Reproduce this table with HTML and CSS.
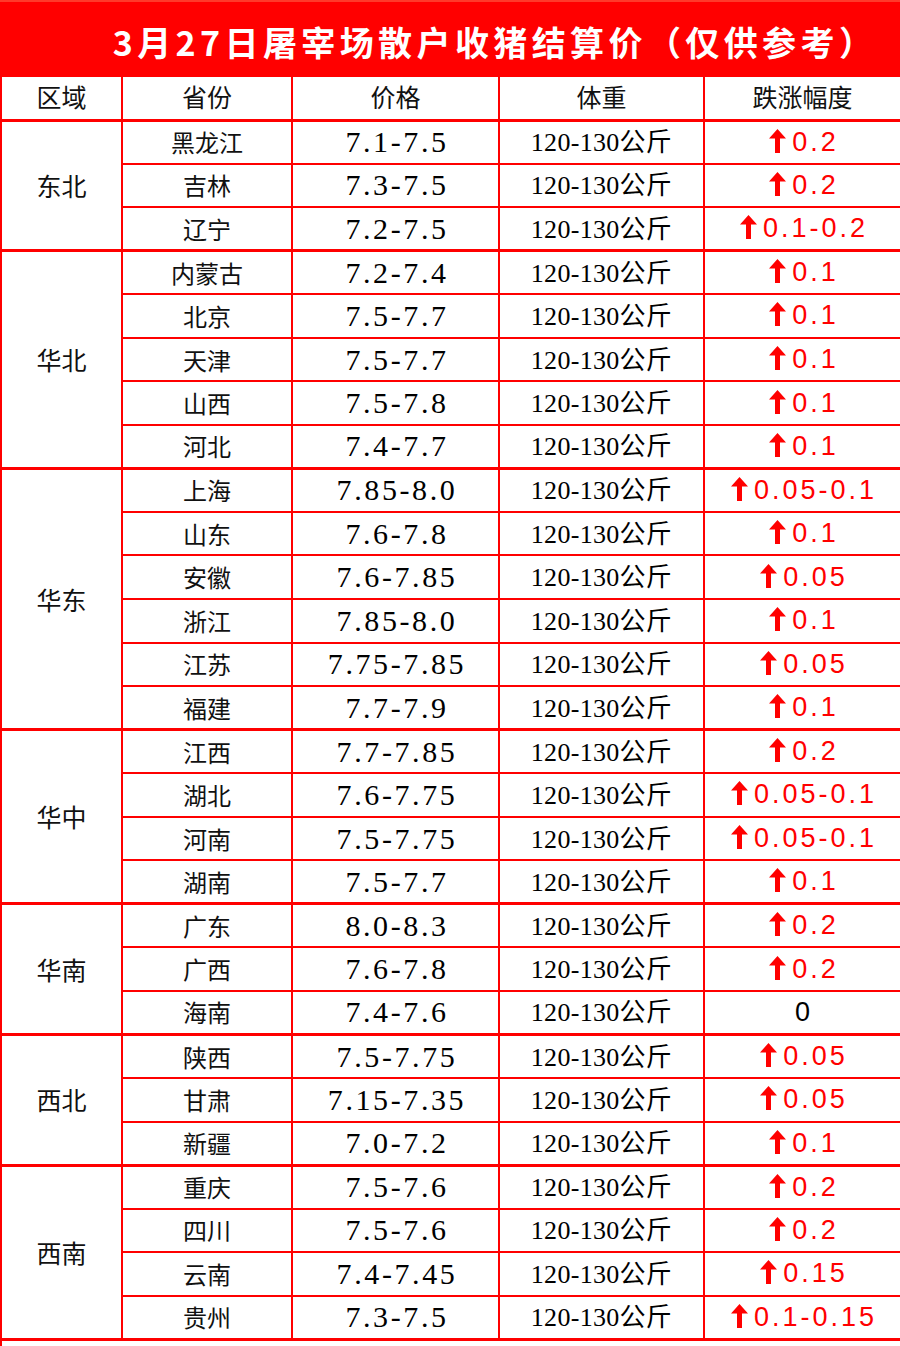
FILE: index.html
```html
<!DOCTYPE html>
<html lang="zh">
<head>
<meta charset="utf-8">
<title>3月27日屠宰场散户收猪结算价</title>
<link rel="stylesheet" href="styles.css">
</head>
<body>
<svg width="0" height="0" class="defs"><defs><symbol id="arr" viewBox="0 0 17 24"><polygon points="8.5,0 17,9.5 11,9.5 11,24 6,24 6,9.5 0,9.5" fill="#ff0000"/></symbol></defs></svg>
<div class="title">3月27日屠宰场散户收猪结算价（仅供参考）</div>
<table class="price-table">
<colgroup><col class="c1"><col class="c2"><col class="c3"><col class="c4"><col class="c5"></colgroup>
<thead>
<tr><th>区域</th><th>省份</th><th>价格</th><th>体重</th><th>跌涨幅度</th></tr>
</thead>
<tbody class="grp">
<tr><td class="region" rowspan="3">东北</td><td class="prov">黑龙江</td><td class="price">7.1-7.5</td><td class="wt">120-130公斤</td><td class="chg"><svg class="up"><use href="#arr"/></svg>0.2</td></tr>
<tr><td class="prov">吉林</td><td class="price">7.3-7.5</td><td class="wt">120-130公斤</td><td class="chg"><svg class="up"><use href="#arr"/></svg>0.2</td></tr>
<tr><td class="prov">辽宁</td><td class="price">7.2-7.5</td><td class="wt">120-130公斤</td><td class="chg"><svg class="up"><use href="#arr"/></svg>0.1-0.2</td></tr>
</tbody>
<tbody class="grp">
<tr><td class="region" rowspan="5">华北</td><td class="prov">内蒙古</td><td class="price">7.2-7.4</td><td class="wt">120-130公斤</td><td class="chg"><svg class="up"><use href="#arr"/></svg>0.1</td></tr>
<tr><td class="prov">北京</td><td class="price">7.5-7.7</td><td class="wt">120-130公斤</td><td class="chg"><svg class="up"><use href="#arr"/></svg>0.1</td></tr>
<tr><td class="prov">天津</td><td class="price">7.5-7.7</td><td class="wt">120-130公斤</td><td class="chg"><svg class="up"><use href="#arr"/></svg>0.1</td></tr>
<tr><td class="prov">山西</td><td class="price">7.5-7.8</td><td class="wt">120-130公斤</td><td class="chg"><svg class="up"><use href="#arr"/></svg>0.1</td></tr>
<tr><td class="prov">河北</td><td class="price">7.4-7.7</td><td class="wt">120-130公斤</td><td class="chg"><svg class="up"><use href="#arr"/></svg>0.1</td></tr>
</tbody>
<tbody class="grp">
<tr><td class="region" rowspan="6">华东</td><td class="prov">上海</td><td class="price">7.85-8.0</td><td class="wt">120-130公斤</td><td class="chg"><svg class="up"><use href="#arr"/></svg>0.05-0.1</td></tr>
<tr><td class="prov">山东</td><td class="price">7.6-7.8</td><td class="wt">120-130公斤</td><td class="chg"><svg class="up"><use href="#arr"/></svg>0.1</td></tr>
<tr><td class="prov">安徽</td><td class="price">7.6-7.85</td><td class="wt">120-130公斤</td><td class="chg"><svg class="up"><use href="#arr"/></svg>0.05</td></tr>
<tr><td class="prov">浙江</td><td class="price">7.85-8.0</td><td class="wt">120-130公斤</td><td class="chg"><svg class="up"><use href="#arr"/></svg>0.1</td></tr>
<tr><td class="prov">江苏</td><td class="price">7.75-7.85</td><td class="wt">120-130公斤</td><td class="chg"><svg class="up"><use href="#arr"/></svg>0.05</td></tr>
<tr><td class="prov">福建</td><td class="price">7.7-7.9</td><td class="wt">120-130公斤</td><td class="chg"><svg class="up"><use href="#arr"/></svg>0.1</td></tr>
</tbody>
<tbody class="grp">
<tr><td class="region" rowspan="4">华中</td><td class="prov">江西</td><td class="price">7.7-7.85</td><td class="wt">120-130公斤</td><td class="chg"><svg class="up"><use href="#arr"/></svg>0.2</td></tr>
<tr><td class="prov">湖北</td><td class="price">7.6-7.75</td><td class="wt">120-130公斤</td><td class="chg"><svg class="up"><use href="#arr"/></svg>0.05-0.1</td></tr>
<tr><td class="prov">河南</td><td class="price">7.5-7.75</td><td class="wt">120-130公斤</td><td class="chg"><svg class="up"><use href="#arr"/></svg>0.05-0.1</td></tr>
<tr><td class="prov">湖南</td><td class="price">7.5-7.7</td><td class="wt">120-130公斤</td><td class="chg"><svg class="up"><use href="#arr"/></svg>0.1</td></tr>
</tbody>
<tbody class="grp">
<tr><td class="region" rowspan="3">华南</td><td class="prov">广东</td><td class="price">8.0-8.3</td><td class="wt">120-130公斤</td><td class="chg"><svg class="up"><use href="#arr"/></svg>0.2</td></tr>
<tr><td class="prov">广西</td><td class="price">7.6-7.8</td><td class="wt">120-130公斤</td><td class="chg"><svg class="up"><use href="#arr"/></svg>0.2</td></tr>
<tr><td class="prov">海南</td><td class="price">7.4-7.6</td><td class="wt">120-130公斤</td><td class="chg flat">0</td></tr>
</tbody>
<tbody class="grp">
<tr><td class="region" rowspan="3">西北</td><td class="prov">陕西</td><td class="price">7.5-7.75</td><td class="wt">120-130公斤</td><td class="chg"><svg class="up"><use href="#arr"/></svg>0.05</td></tr>
<tr><td class="prov">甘肃</td><td class="price">7.15-7.35</td><td class="wt">120-130公斤</td><td class="chg"><svg class="up"><use href="#arr"/></svg>0.05</td></tr>
<tr><td class="prov">新疆</td><td class="price">7.0-7.2</td><td class="wt">120-130公斤</td><td class="chg"><svg class="up"><use href="#arr"/></svg>0.1</td></tr>
</tbody>
<tbody class="grp">
<tr><td class="region" rowspan="4">西南</td><td class="prov">重庆</td><td class="price">7.5-7.6</td><td class="wt">120-130公斤</td><td class="chg"><svg class="up"><use href="#arr"/></svg>0.2</td></tr>
<tr><td class="prov">四川</td><td class="price">7.5-7.6</td><td class="wt">120-130公斤</td><td class="chg"><svg class="up"><use href="#arr"/></svg>0.2</td></tr>
<tr><td class="prov">云南</td><td class="price">7.4-7.45</td><td class="wt">120-130公斤</td><td class="chg"><svg class="up"><use href="#arr"/></svg>0.15</td></tr>
<tr><td class="prov">贵州</td><td class="price">7.3-7.5</td><td class="wt">120-130公斤</td><td class="chg"><svg class="up"><use href="#arr"/></svg>0.1-0.15</td></tr>
</tbody>
<tbody class="grp tail">
<tr><td colspan="5"></td></tr>
</tbody>
</table>
</body>
</html>
```

FILE: styles.css
```css
html, body {
  margin: 0;
  padding: 0;
  background: #ffffff;
}

body {
  width: 900px;
  font-family: "Noto Sans CJK SC", sans-serif;
  color: #000;
}

.defs {
  position: absolute;
  width: 0;
  height: 0;
  overflow: hidden;
}

.title {
  box-sizing: border-box;
  height: 75px;
  background: #ff0000;
  border-top: 2px solid #ff3a2a;
  color: #ffffff;
  font-family: "Noto Sans CJK SC", sans-serif;
  font-weight: 700;
  font-size: 34px;
  letter-spacing: 4.4px;
  display: flex;
  align-items: center;
  justify-content: center;
  padding-left: 90px;
  padding-top: 6px;
  white-space: nowrap;
}

.price-table {
  width: 900px;
  border-collapse: collapse;
  table-layout: fixed;
}

.c1 { width: 121px; }
.c2 { width: 170px; }
.c3 { width: 207px; }
.c4 { width: 205px; }
.c5 { width: 197px; }

.price-table th,
.price-table td {
  border: 2px solid #ff0000;
  text-align: center;
  vertical-align: middle;
  padding: 0;
  line-height: 1;
  white-space: nowrap;
}

.price-table thead tr {
  height: 44px;
}

.price-table thead th {
  font-weight: 400;
  font-size: 25px;
  font-family: "Noto Sans CJK SC", sans-serif;
  color: #111;
  padding-bottom: 2px;
}

.price-table tbody tr {
  height: 43.55px;
}

.grp tr:first-child td {
  border-top-width: 3px;
}

.region {
  font-size: 25px;
  color: #111;
}

.prov {
  font-size: 24px;
  color: #111;
}

.price {
  font-family: "Liberation Serif", serif;
  font-size: 30px;
  letter-spacing: 2.6px;
  padding-left: 3px !important;
}

.wt {
  font-family: "Liberation Serif", "Noto Sans CJK SC", serif;
  font-size: 26px;
  letter-spacing: 0.3px;
  padding-top: 2px !important;
}

.chg {
  color: #ff0000;
  font-family: "Liberation Sans", sans-serif;
  font-size: 27px;
  letter-spacing: 3px;
  padding-left: 3px !important;
}

.chg.flat {
  color: #000;
}

.up {
  width: 17px;
  height: 24px;
  vertical-align: -2px;
  margin-right: 6px;
}

.tail tr {
  height: 20px;
}

.tail td {
  border-bottom: none;
}
```
